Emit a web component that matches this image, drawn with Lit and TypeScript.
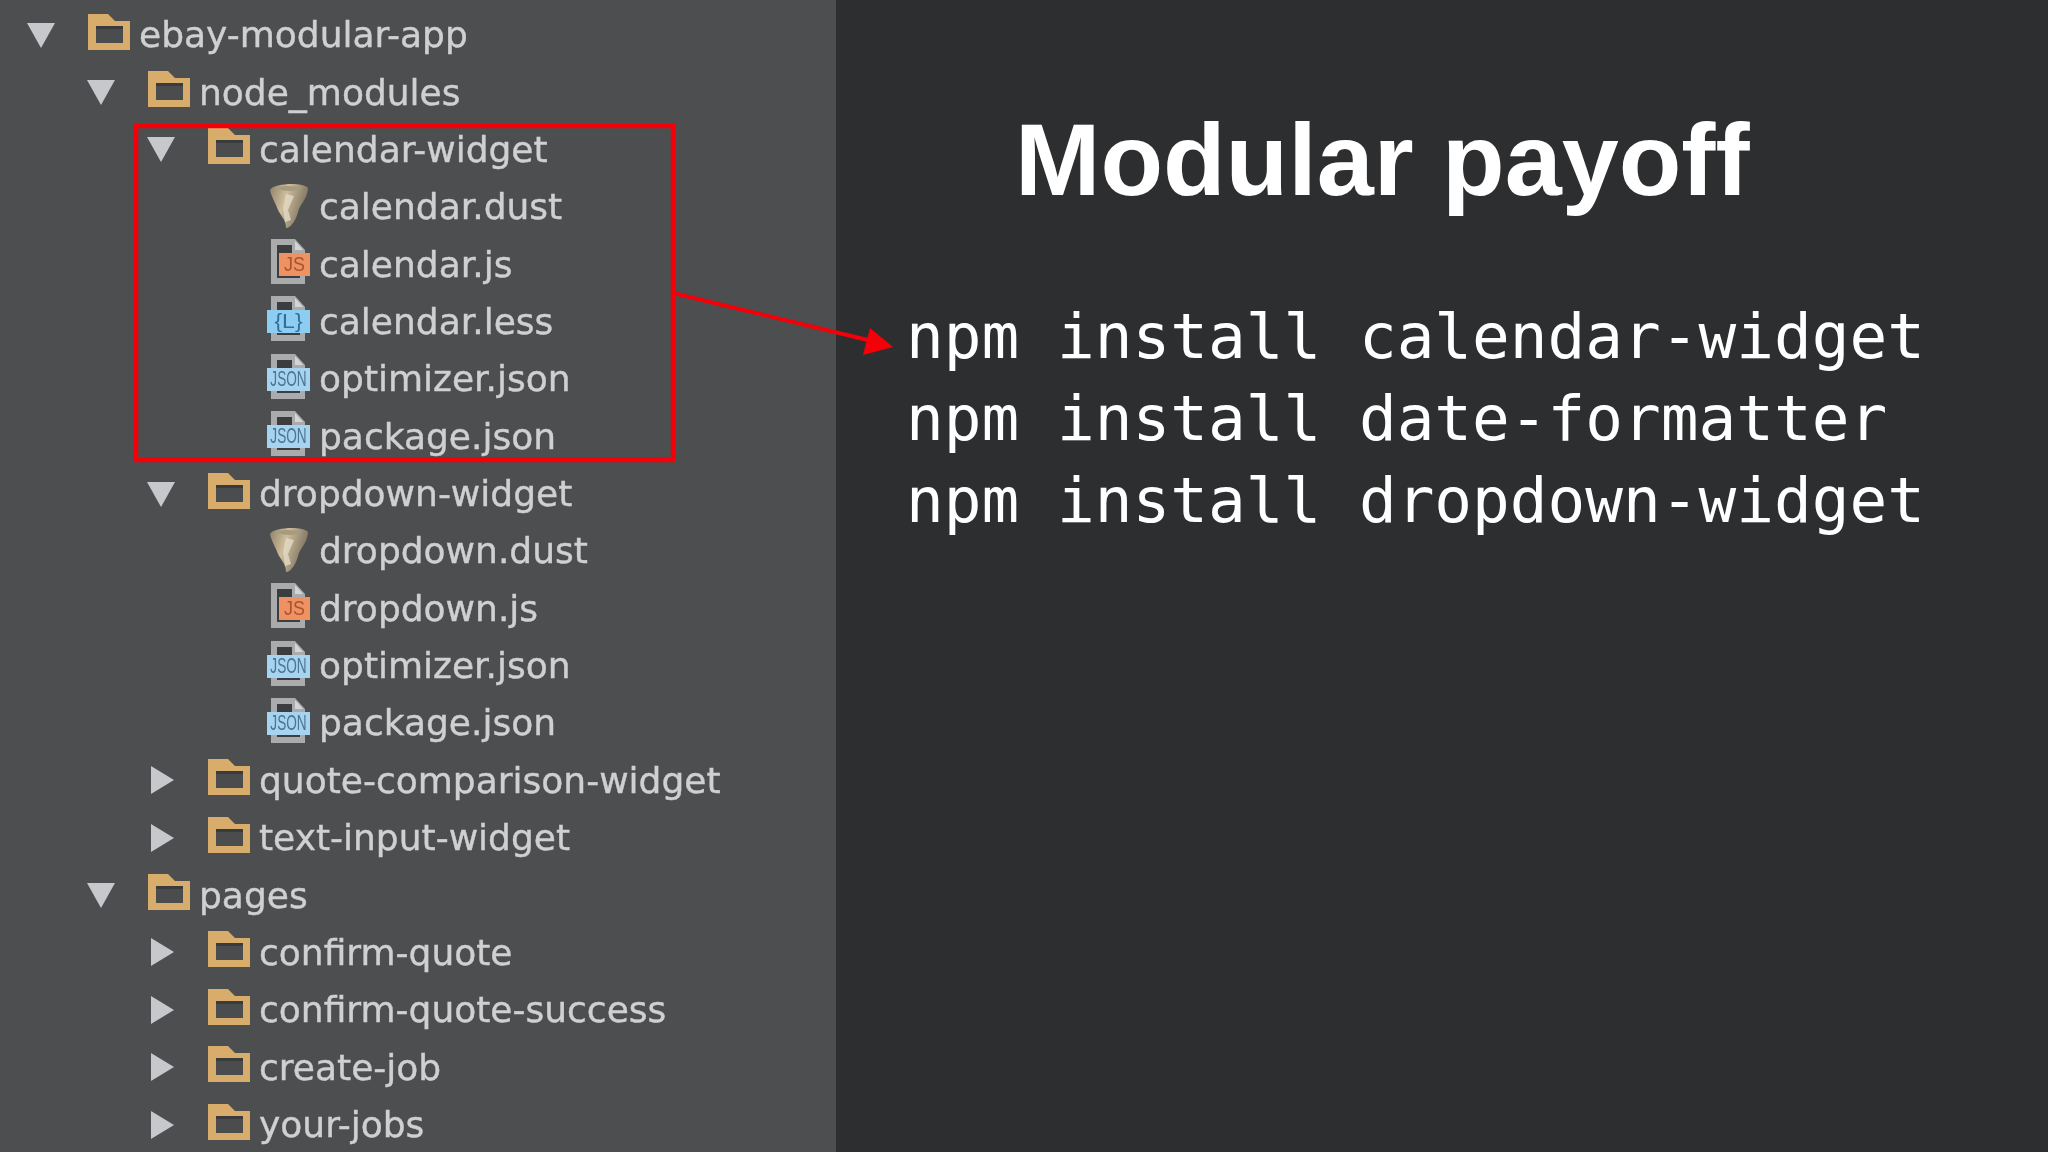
import { LitElement, html, css, svg } from "lit";
import { customElement } from "lit/decorators.js";

type Kind = "folder" | "dust" | "js" | "less" | "json";
interface Row { level: number; name: string; kind: Kind; open?: boolean; }

const rows: Row[] = [
  { level: 0, name: "ebay-modular-app", kind: "folder", open: true },
  { level: 1, name: "node_modules", kind: "folder", open: true },
  { level: 2, name: "calendar-widget", kind: "folder", open: true },
  { level: 3, name: "calendar.dust", kind: "dust" },
  { level: 3, name: "calendar.js", kind: "js" },
  { level: 3, name: "calendar.less", kind: "less" },
  { level: 3, name: "optimizer.json", kind: "json" },
  { level: 3, name: "package.json", kind: "json" },
  { level: 2, name: "dropdown-widget", kind: "folder", open: true },
  { level: 3, name: "dropdown.dust", kind: "dust" },
  { level: 3, name: "dropdown.js", kind: "js" },
  { level: 3, name: "optimizer.json", kind: "json" },
  { level: 3, name: "package.json", kind: "json" },
  { level: 2, name: "quote-comparison-widget", kind: "folder", open: false },
  { level: 2, name: "text-input-widget", kind: "folder", open: false },
  { level: 1, name: "pages", kind: "folder", open: true },
  { level: 2, name: "confirm-quote", kind: "folder", open: false },
  { level: 2, name: "confirm-quote-success", kind: "folder", open: false },
  { level: 2, name: "create-job", kind: "folder", open: false },
  { level: 2, name: "your-jobs", kind: "folder", open: false },
];

const folder = html`<svg class="ficon" viewBox="0 0 44 40" width="44" height="40">
  <path d="M1 2H21L28 9H43V38H1Z" fill="#d8ad6c"/>
  <rect x="9" y="14" width="27" height="17" fill="#4a4c4e"/>
  <rect x="9" y="14" width="27" height="3" fill="#3a3b3c"/>
</svg>`;

const fileBase = svg`<path d="M4 0H28L38 11V45H4Z" fill="#a9abad"/>
  <path d="M10 6H25V14H33V39H10Z" fill="#3c3d3f"/>
  <path d="M28 2L36 11H28Z" fill="#d4d5d7"/>`;

function badge(bg: string, fg: string, label: string, x: number, w: number, size: number, sx: number) {
  return svg`<rect x="${x}" y="14" width="${w}" height="23" fill="${bg}"/>
    <g transform="translate(${x + w / 2} 32) scale(${sx} 1)">
      <text x="0" y="0" text-anchor="middle" font-family="Liberation Sans, sans-serif" font-size="${size}" fill="${fg}">${label}</text>
    </g>`;
}

function icon(kind: Kind) {
  if (kind === "dust") {
    return html`<svg class="dicon" viewBox="0 0 44 48" width="44" height="48">
      <defs><linearGradient id="dg" x1="0" y1="0" x2="1" y2="0.35">
        <stop offset="0" stop-color="#8f8166"/><stop offset="0.45" stop-color="#cdbd9c"/><stop offset="1" stop-color="#7d7260"/>
      </linearGradient></defs>
      <path d="M3 8C7 1 36 0 41 6C41 16 33 22 31 30C29 38 24 46 19 46C19 38 14 34 11 28C8 20 4 14 3 8Z" fill="url(#dg)"/>
      <path d="M10 6C18 3 28 4 34 6C28 10 16 10 10 6Z" fill="#a89a7e"/>
      <path d="M19 12L27 14L21 28L24 38L18 40L16 26Z" fill="#e4dbc6" opacity="0.8"/>
    </svg>`;
  }
  const b =
    kind === "js" ? badge("#ee9163", "#a8552f", "JS", 12, 31, 20, 0.9)
    : kind === "less" ? badge("#8ecdf2", "#2f6f9c", "{L}", 0, 43, 20, 1.15)
    : badge("#a6d3f0", "#4a7690", "JSON", 0, 43, 22, 0.62);
  return html`<svg class="dicon" viewBox="0 0 44 48" width="44" height="48">${fileBase}${b}</svg>`;
}

const toggle = (open: boolean) =>
  open
    ? html`<svg class="tog" viewBox="0 0 30 28" width="30" height="28"><path d="M1 2H29L15 27Z" fill="#c6c8cc"/></svg>`
    : html`<svg class="tog" viewBox="0 0 30 28" width="30" height="28"><path d="M5 0L28 14L5 28Z" fill="#c6c8cc"/></svg>`;

@customElement("app-root")
export class AppRoot extends LitElement {
  static styles = css`
    :host { display: block; width: 2048px; height: 1152px; overflow: hidden; position: relative; background: #2d2e2f; }
    .page { display: flex; width: 2048px; height: 1152px; }
    .tree { width: 836px; flex: none; background: #4c4e50; padding-top: 6px; overflow: hidden; box-sizing: border-box; filter: blur(0.7px); }
    .row { display: flex; align-items: center; height: 57.36px; white-space: nowrap; }
    .toggle-slot { width: 87px; flex: none; padding-left: 26px; box-sizing: border-box; }
    .tog { display: block; flex: none; }
    .icon-slot { width: 52px; flex: none; display: flex; align-items: center; }
    .ficon { display: block; margin-top: -6px; }
    .dicon { display: block; margin-top: -2px; }
    .label { font-family: "DejaVu Sans", sans-serif; font-size: 36px; color: #cfd0d1; -webkit-text-stroke: 0.4px #cfd0d1; }
    .right { flex: 1; padding: 96px 0 0 70px; box-sizing: border-box; }
    .title { font-family: "Liberation Sans", Arial, sans-serif; font-weight: 700; font-size: 102.5px; line-height: 128px; color: #fff; margin: 0 0 0 109px; }
    .code { margin: 72px 0 0; font-family: "DejaVu Sans Mono", monospace; font-size: 62.7px; line-height: 82px; color: #fff; }
    .code div { white-space: pre; }
    .overlay { position: absolute; left: 0; top: 0; pointer-events: none; }
  `;

  render() {
    return html`<div class="page">
        <div class="tree">
          ${rows.map(
            (r) => html`<div class="row" style="padding-left:${r.level * 60}px">
              <span class="toggle-slot">${r.kind === "folder" ? toggle(!!r.open) : ""}</span>
              <span class="icon-slot">${r.kind === "folder" ? folder : icon(r.kind)}</span>
              <span class="label">${r.name}</span>
            </div>`
          )}
        </div>
        <div class="right">
          <h1 class="title">Modular payoff</h1>
          <div class="code">
            <div>npm install calendar-widget</div>
            <div>npm install date-formatter</div>
            <div>npm install dropdown-widget</div>
          </div>
        </div>
      </div>
      <svg class="overlay" width="2048" height="1152" viewBox="0 0 2048 1152">
        <rect x="136" y="126" width="537" height="334" fill="none" stroke="#f40008" stroke-width="4.5"/>
        <path d="M673 293L872 341" stroke="#f40008" stroke-width="4" fill="none"/>
        <path d="M870 328L893 347L863 355Z" fill="#f40008"/>
      </svg>`;
  }
}
